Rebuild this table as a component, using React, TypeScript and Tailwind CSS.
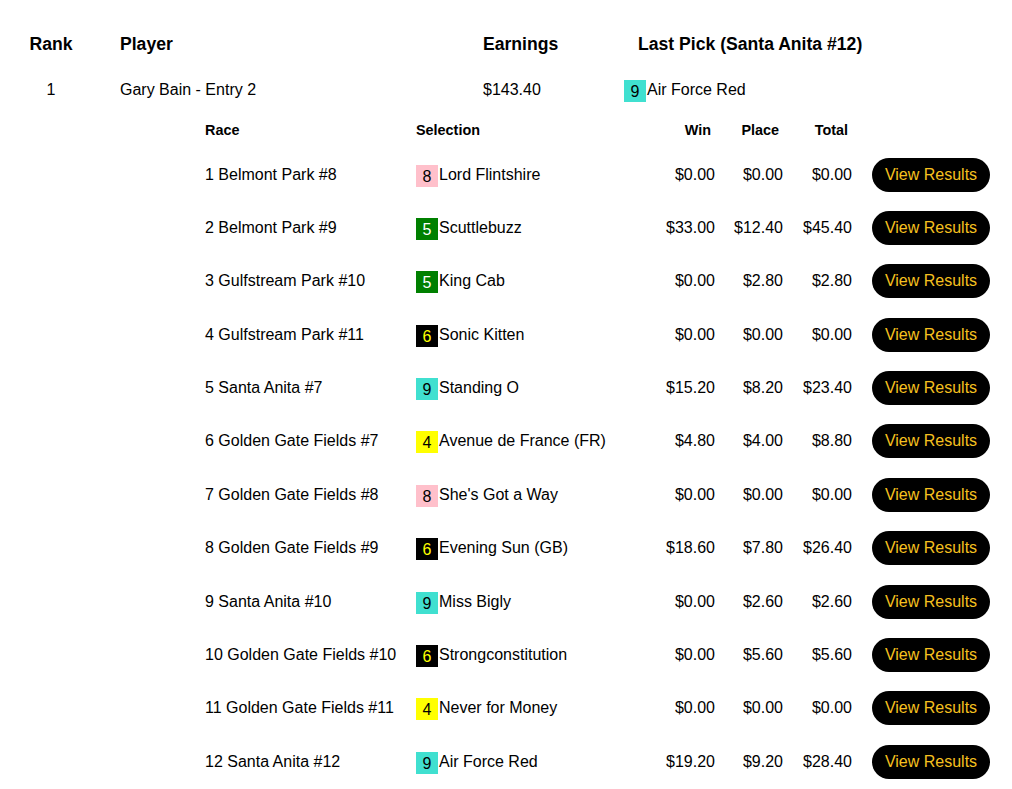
const badgeStyles: Record<number, string> = {
  4: "bg-[#ffff00] text-black",
  5: "bg-[#008000] text-white",
  6: "bg-black text-[#ffff00]",
  8: "bg-[#ffc0cb] text-black",
  9: "bg-[#40e0d0] text-black",
};

type Pick = {
  race: string;
  num: number;
  horse: string;
  win: string;
  place: string;
  total: string;
};

const picks: Pick[] = [
  { race: "1 Belmont Park #8", num: 8, horse: "Lord Flintshire", win: "$0.00", place: "$0.00", total: "$0.00" },
  { race: "2 Belmont Park #9", num: 5, horse: "Scuttlebuzz", win: "$33.00", place: "$12.40", total: "$45.40" },
  { race: "3 Gulfstream Park #10", num: 5, horse: "King Cab", win: "$0.00", place: "$2.80", total: "$2.80" },
  { race: "4 Gulfstream Park #11", num: 6, horse: "Sonic Kitten", win: "$0.00", place: "$0.00", total: "$0.00" },
  { race: "5 Santa Anita #7", num: 9, horse: "Standing O", win: "$15.20", place: "$8.20", total: "$23.40" },
  { race: "6 Golden Gate Fields #7", num: 4, horse: "Avenue de France (FR)", win: "$4.80", place: "$4.00", total: "$8.80" },
  { race: "7 Golden Gate Fields #8", num: 8, horse: "She's Got a Way", win: "$0.00", place: "$0.00", total: "$0.00" },
  { race: "8 Golden Gate Fields #9", num: 6, horse: "Evening Sun (GB)", win: "$18.60", place: "$7.80", total: "$26.40" },
  { race: "9 Santa Anita #10", num: 9, horse: "Miss Bigly", win: "$0.00", place: "$2.60", total: "$2.60" },
  { race: "10 Golden Gate Fields #10", num: 6, horse: "Strongconstitution", win: "$0.00", place: "$5.60", total: "$5.60" },
  { race: "11 Golden Gate Fields #11", num: 4, horse: "Never for Money", win: "$0.00", place: "$0.00", total: "$0.00" },
  { race: "12 Santa Anita #12", num: 9, horse: "Air Force Red", win: "$19.20", place: "$9.20", total: "$28.40" },
];

function Horse({ num, name }: { num: number; name: string }) {
  return (
    <div className="flex items-center">
      <span className={`inline-flex h-[22px] w-[22px] translate-y-[1px] items-center justify-center pt-[2px] leading-none ${badgeStyles[num]}`}>
        {num}
      </span>
      <span className="pl-[1px]">{name}</span>
    </div>
  );
}

export default function App() {
  return (
    <div className="min-h-screen bg-white pt-[21px] text-[16px] text-black" style={{ fontFamily: '"Liberation Sans", Arial, sans-serif' }}>
      {/* leaderboard header */}
      <div className="grid h-[46px] grid-cols-[120px_363px_141px_1fr] items-center text-[17.6px] font-bold">
        <div className="w-[102px] text-center">Rank</div>
        <div>Player</div>
        <div>Earnings</div>
        <div className="pl-[14px]">Last Pick (Santa Anita #12)</div>
      </div>

      <div className="grid h-[46px] grid-cols-[120px_363px_141px_1fr] items-center">
        <div className="w-[102px] text-center">1</div>
        <div>Gary Bain - Entry 2</div>
        <div>$143.40</div>
        <Horse num={9} name="Air Force Red" />
      </div>

      {/* picks detail */}
      <div className="ml-[205px]">
        <div className="grid h-[35px] grid-cols-[211px_229px_70px_68px_69px_1fr] items-center text-[14.4px] font-bold">
          <div>Race</div>
          <div>Selection</div>
          <div className="pr-[4px] text-right">Win</div>
          <div className="pr-[4px] text-right">Place</div>
          <div className="pr-[4px] text-right">Total</div>
          <div />
        </div>
        {picks.map((p) => (
          <div key={p.race} className="grid h-[53.36px] grid-cols-[211px_229px_70px_68px_69px_1fr] items-center">
            <div>{p.race}</div>
            <Horse num={p.num} name={p.horse} />
            <div className="text-right">{p.win}</div>
            <div className="text-right">{p.place}</div>
            <div className="text-right">{p.total}</div>
            <div className="pl-[20px]">
              <button className="h-[34px] w-[118px] rounded-full bg-black text-[16px] text-[#f6c01f]">
                View Results
              </button>
            </div>
          </div>
        ))}
      </div>
    </div>
  );
}
